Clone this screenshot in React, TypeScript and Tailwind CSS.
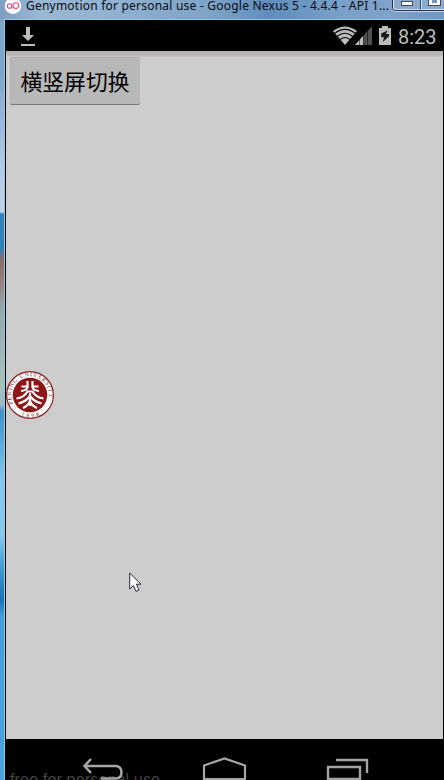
import React from "react";

function TitleBar() {
  return (
    <header className="relative flex h-[19px] shrink-0 bg-[linear-gradient(to_right,#7c9fc4_0px,#9bb8d3_40px,#8fb0d0_120px,#7da3c8_210px,#5f8dbc_270px,#78a0c8_340px,#7fa3cb_390px,#6d96c4_444px)]">
      <svg className="ml-[5px] h-[15px] w-4 shrink-0" viewBox="0 0 16 15">
        <circle cx="8" cy="5.8" r="8.2" fill="#fff" />
        <circle cx="4.7" cy="6" r="2.3" fill="none" stroke="#e8487e" strokeWidth="1.1" />
        <circle cx="10.9" cy="5.6" r="2.9" fill="none" stroke="#e8487e" strokeWidth="1.1" />
      </svg>
      <div className="ml-[5px] -mt-[3px] h-[18px] w-[366px] whitespace-pre font-['Noto_Sans','Open_Sans',sans-serif] text-[12px] leading-[18px] tracking-[0.22px] text-[#080c14]">
        Genymotion for personal use - Google Nexus 5 - 4.4.4 - API 1...
      </div>
      <div className="flex h-[11px] w-[52px] shrink-0 rounded-bl-[4px] border-b border-l border-[#202f4b] bg-[#8ba9cb] shadow-[0_1px_0_#c4d8ec]">
        <div className="flex h-full w-[28px] justify-center rounded-bl-[3px] border-b border-l border-r border-b-[#d6e3f0] border-l-[#d6e3f0] border-r-[#33476a]">
          <div className="mt-[1px] h-[5px] w-3 border border-[#424b5b] bg-white" />
        </div>
        <div className="h-full flex-1 border-b border-l border-[#d6e3f0] pl-[7px]">
          <div className="h-[5px] w-[11px] border-x-[3px] border-b-[2px] border-white bg-[#7592b8] outline outline-1 outline-[#424b5b]" />
        </div>
      </div>
    </header>
  );
}

function StatusBar() {
  return (
    <div className="flex h-[31px] shrink-0 items-start bg-black text-[#bdbdbd]">
      <svg className="ml-[15px] mt-[7px] h-5 w-[14px]" viewBox="0 0 14 20" fill="#bebebe">
        <path d="M5 0h4v8h4l-6 6-6-6h4zM0 17h14v2H0z" />
      </svg>
      <svg className="ml-[298px] mt-[6px] h-5 w-6" viewBox="0 0 24 20">
        <path d="M0 5Q12-4 24 5L12 19Z" fill="#bdbdbd" />
        <path d="M1.7 7.3Q12-.6 22.3 7.3M4.2 10.5Q12 4.1 19.8 10.5M7 13.6Q12 9.3 17 13.6" fill="none" stroke="#000" strokeWidth="1.1" />
      </svg>
      <svg className="-ml-[2px] mt-[6px] h-5 w-[18px]" viewBox="0 0 18 20">
        <path d="M0 19L17 0V19Z" fill="#505050" />
        <path d="M0 19L8.2 9.8V19Z" fill="#bdbdbd" />
        <path d="M4.5 10V19M8.5 7V19M12.5 3V19" stroke="#000" strokeWidth=".5" />
      </svg>
      <svg className="ml-[5px] mt-[6px] h-5 w-[14px]" viewBox="0 0 14 20">
        <path d="M4 0h6v2h3v17H1V2h3z" fill="#bdbdbd" />
        <path d="M9.5 4.5L3.2 7.5V11.2H6L4.8 16L11 10.2V8H8Z" fill="#181818" />
      </svg>
      <span className="ml-[6px] mt-[5px] whitespace-nowrap font-[Roboto,sans-serif] text-[20px] leading-[24px] text-[#bdbdbd]">8:23</span>
    </div>
  );
}

function Seal() {
  return (
    <svg className="mt-[265px] block h-[50px] w-[50px]" viewBox="0 0 50 50">
      <defs>
        <path id="sealTop" d="M8.9 36.2A18.8 18.8 0 1 1 40.1 34.6" />
        <path id="sealBottom" d="M10 42.4A22.3 22.3 0 0 0 38 42.4" />
      </defs>
      <circle cx="24" cy="25" r="23.4" fill="#fff" stroke="#8b2020" strokeWidth="1.2" />
      <circle cx="24" cy="25" r="17.3" fill="#8b1718" />
      <g fill="#8b1718" fontFamily="Liberation Serif, serif" fontSize="5.8">
        <text letterSpacing="0.8"><textPath href="#sealTop" startOffset="3">PEKING UNIVERSITY</textPath></text>
        <text letterSpacing="2.4"><textPath href="#sealBottom" startOffset="6">1898</textPath></text>
      </g>
      <g fill="none" stroke="#fff" strokeWidth="2.2">
        <path d="M21.5 11V17.5Q20.5 20.5 15 21M26.5 11V17.5Q27.5 20.5 33 21M15.5 16.5H21M27 16.5H32.5" />
        <path d="M10.5 28.5Q18 27.5 21.5 21.5H26.5Q30 27.5 37.5 28.5" />
        <path d="M12.5 33.5Q19.5 32 24 26Q28.5 32 35.5 33.5M24 23V36M17 38Q22 36 24 31Q26 36 31 38" />
      </g>
    </svg>
  );
}

function NavigationBar() {
  return (
    <footer className="relative h-[41px] shrink-0 bg-black">
      <div className="absolute left-[4px] top-[32px] whitespace-nowrap font-['Liberation_Sans',sans-serif] text-[16px] leading-[18px] tracking-[0.16px] text-[#444]">
        free for personal use
      </div>
      <div className="relative flex h-[41px] pt-[18px]">
        <svg className="ml-[76px] h-[23px] w-[42px]" viewBox="0 0 42 23" fill="none" stroke="#a6a6a6" strokeWidth="2.5">
          <path d="M9 2L2.5 9L9 16M2.5 9H33Q39.5 9 39.5 15.5Q39.5 21.5 33 21.5H19" />
        </svg>
        <svg className="ml-[78px] h-[23px] w-[45px]" viewBox="0 0 45 23" fill="none" stroke="#a6a6a6" strokeWidth="2.2">
          <path d="M2 22V8.5L22.5 1.5L43 8.5V22Z" />
        </svg>
        <svg className="ml-[79px] h-[23px] w-[43px]" viewBox="0 0 43 23" fill="none" stroke="#a3a3a3" strokeWidth="2.4">
          <path d="M2 30V10H34V30M2 22H34M10 3H41V16" />
        </svg>
      </div>
    </footer>
  );
}

export default function App() {
  return (
    <div className="relative flex h-[780px] w-[444px] flex-col overflow-hidden bg-[linear-gradient(to_bottom,#80a5ca_0px,#7ba3cb_70px,#b3cce4_170px,#bed3e5_212px,#3182be_214px,#337fb8_249px,#8f6b6c_260px,#987c79_279px,#94a9ad_310px,#a6c2bd_385px,#96bac0_405px,#428fc8_411px,#5fabdb_445px,#85c7ef_480px,#8bc9ee_535px,#44a0d4_565px,#1873b5_600px,#43a0db_617px,#49a4dc_780px)]">
      <TitleBar />
      <div className="ml-[4px] flex h-[761px] shrink-0 flex-col border-l border-t border-[#8fc7e9] bg-black">
        <div className="flex h-[760px] w-[438px] flex-col pl-px">
          <StatusBar />
          <main className="h-[688px] shrink-0 overflow-hidden bg-[#cdcdcd]">
            <div className="h-[6px] bg-[linear-gradient(#b7b2b5_0px,#b7b2b5_4px,#c9c9c9_6px)]" />
            <button className="ml-[4px] block h-[48px] w-[130px] rounded-[2px] border-b border-[#777] bg-[#b8b8b8] font-['Noto_Sans_CJK_SC',sans-serif] text-[21.8px] leading-[46px] text-black shadow-[inset_1px_1px_#b0b0b0]">
              横竖屏切换
            </button>
            <Seal />
          </main>
          <NavigationBar />
        </div>
      </div>
      <svg className="absolute left-[129px] top-[572px] h-[21px] w-[14px]" viewBox="0 0 14 21">
        <path d="M.7 1V17L4.4 13.5L7 19.4L10 18L7.4 12.2H12Z" fill="#fff" stroke="#25283b" strokeWidth="1" />
      </svg>
    </div>
  );
}
